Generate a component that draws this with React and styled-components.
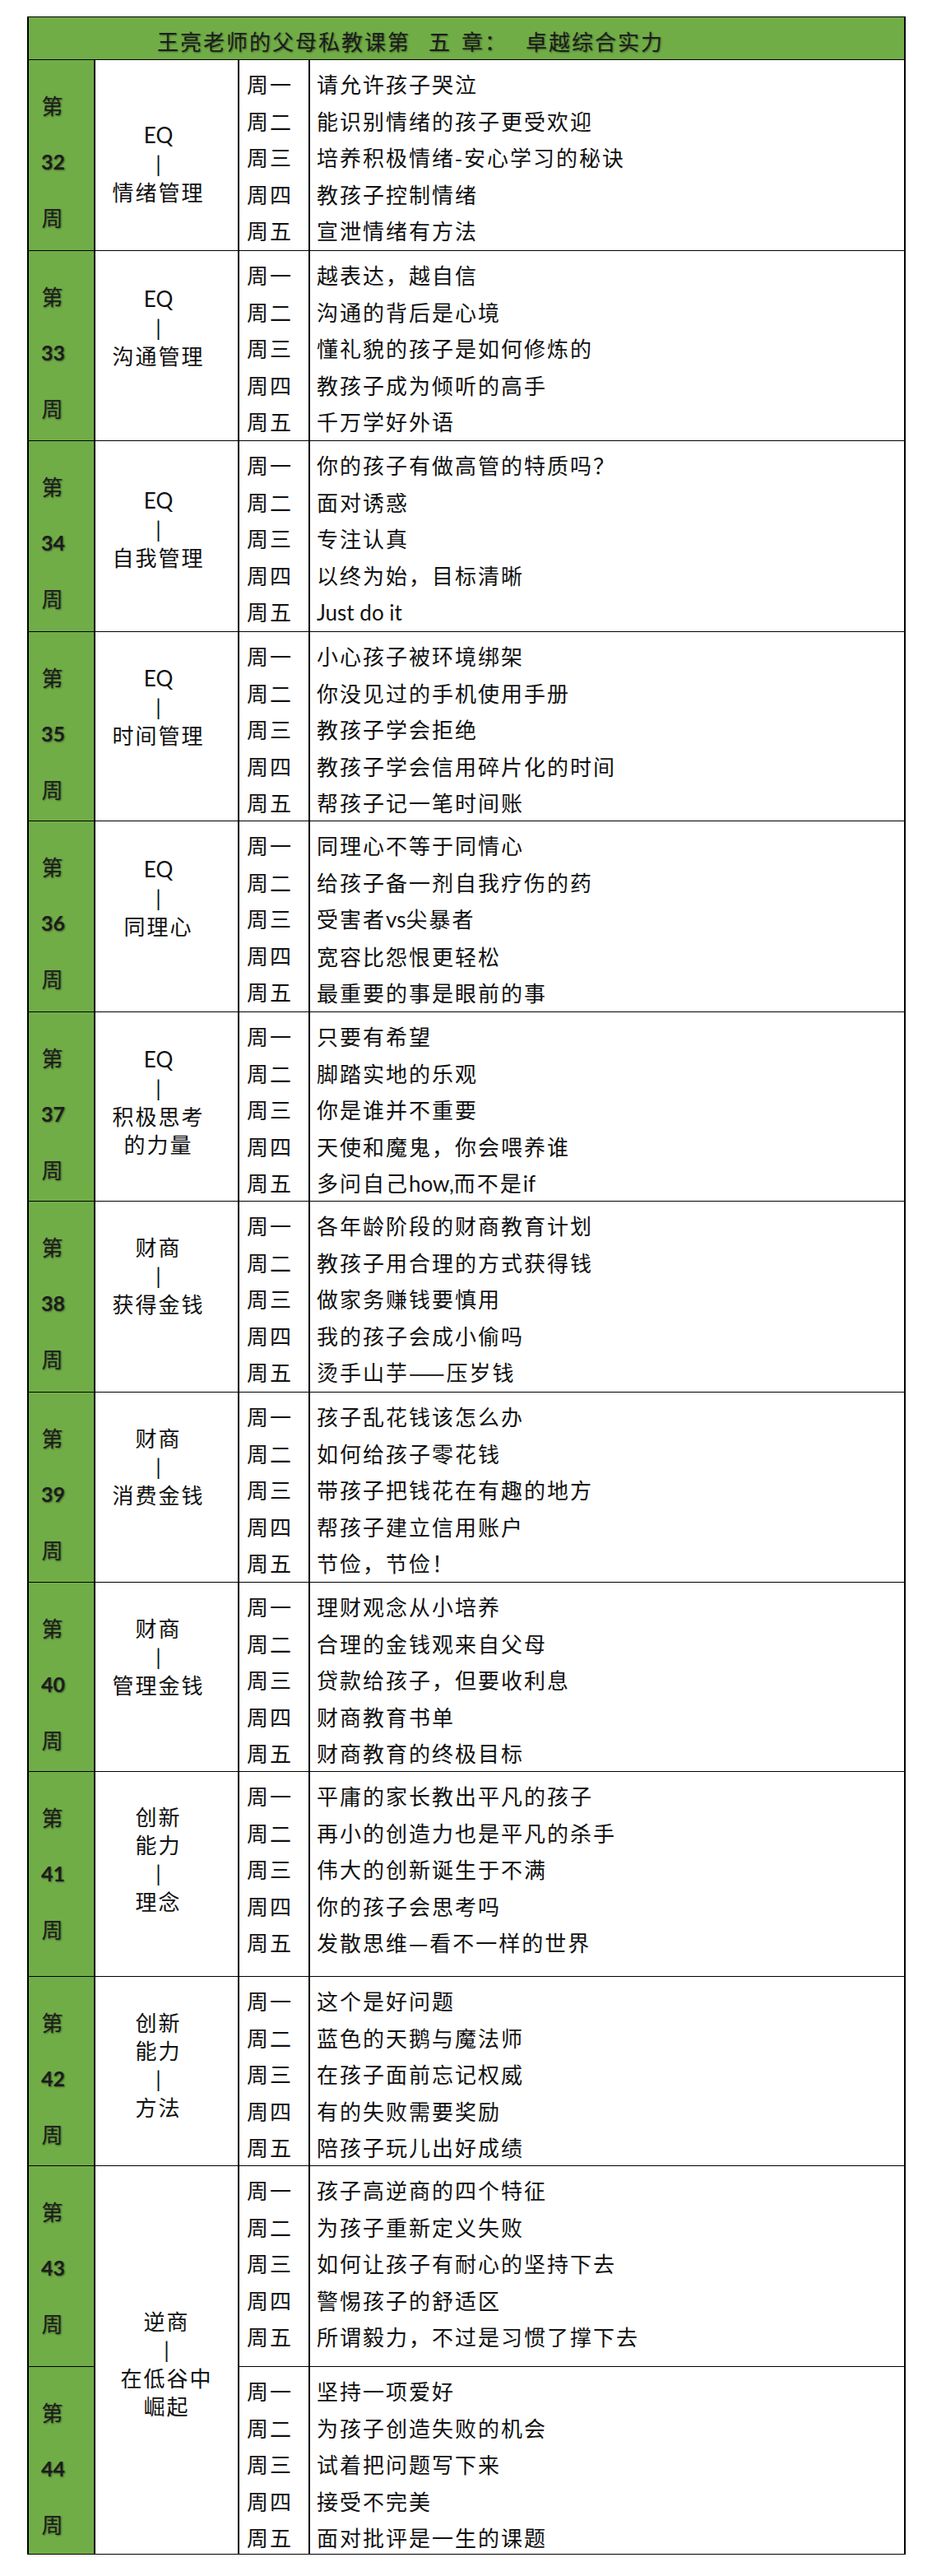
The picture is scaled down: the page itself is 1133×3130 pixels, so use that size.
import React from "react"
import styled, { createGlobalStyle } from "styled-components"

const GlobalStyle = createGlobalStyle`
    html, body {
        margin: 0;
        padding: 0;
        background: #fff;
    }
    body {
        font-family: "Noto Sans CJK SC", "Noto Sans", sans-serif;
        color: #111;
    }
`

const weeks = [
    { n: 32, h: 232, tp: 73, topic: ["EQ", "|", "情绪管理"], days: ["请允许孩子哭泣", "能识别情绪的孩子更受欢迎", "培养积极情绪-安心学习的秘诀", "教孩子控制情绪", "宣泄情绪有方法"] },
    { n: 33, h: 231, tp: 40, topic: ["EQ", "|", "沟通管理"], days: ["越表达，越自信", "沟通的背后是心境", "懂礼貌的孩子是如何修炼的", "教孩子成为倾听的高手", "千万学好外语"] },
    { n: 34, h: 232, tp: 54, topic: ["EQ", "|", "自我管理"], days: ["你的孩子有做高管的特质吗？", "面对诱惑", "专注认真", "以终为始，目标清晰", "Just do it"] },
    { n: 35, h: 230, tp: 38, topic: ["EQ", "|", "时间管理"], days: ["小心孩子被环境绑架", "你没见过的手机使用手册", "教孩子学会拒绝", "教孩子学会信用碎片化的时间", "帮孩子记一笔时间账"] },
    { n: 36, h: 232, tp: 40, topic: ["EQ", "|", "同理心"], days: ["同理心不等于同情心", "给孩子备一剂自我疗伤的药", "受害者vs尖暴者", "宽容比怨恨更轻松", "最重要的事是眼前的事"] },
    { n: 37, h: 230, tp: 39, topic: ["EQ", "|", "积极思考", "的力量"], days: ["只要有希望", "脚踏实地的乐观", "你是谁并不重要", "天使和魔鬼，你会喂养谁", "多问自己how,而不是if"] },
    { n: 38, h: 232, tp: 38, topic: ["财商", "|", "获得金钱"], days: ["各年龄阶段的财商教育计划", "教孩子用合理的方式获得钱", "做家务赚钱要慎用", "我的孩子会成小偷吗", "烫手山芋——压岁钱"] },
    { n: 39, h: 231, tp: 38, topic: ["财商", "|", "消费金钱"], days: ["孩子乱花钱该怎么办", "如何给孩子零花钱", "带孩子把钱花在有趣的地方", "帮孩子建立信用账户", "节俭，节俭！"] },
    { n: 40, h: 230, tp: 38, topic: ["财商", "|", "管理金钱"], days: ["理财观念从小培养", "合理的金钱观来自父母", "贷款给孩子，但要收利息", "财商教育书单", "财商教育的终极目标"] },
    { n: 41, h: 249, tp: 37, topic: ["创新", "能力", "|", "理念"], days: ["平庸的家长教出平凡的孩子", "再小的创造力也是平凡的杀手", "伟大的创新诞生于不满", "你的孩子会思考吗", "发散思维—看不一样的世界"] },
    { n: 42, h: 230, tp: 38, topic: ["创新", "能力", "|", "方法"], days: ["这个是好问题", "蓝色的天鹅与魔法师", "在孩子面前忘记权威", "有的失败需要奖励", "陪孩子玩儿出好成绩"] },
    { n: 43, h: 244, tp: 171, span: 2, pr: 0, topic: ["逆商", "|", "在低谷中", "崛起"], days: ["孩子高逆商的四个特征", "为孩子重新定义失败", "如何让孩子有耐心的坚持下去", "警惕孩子的舒适区", "所谓毅力，不过是习惯了撑下去"] },
    { n: 44, h: 228, days: ["坚持一项爱好", "为孩子创造失败的机会", "试着把问题写下来", "接受不完美", "面对批评是一生的课题"] },
]

const dayNames = ["周一", "周二", "周三", "周四", "周五"]

const Sheet = styled.div`
    margin: 20px 0 0 33px;
    width: 1068px;
    box-sizing: border-box;
    border-left: 2px solid #000;
    border-right: 2px solid #000;
`

const Title = styled.div`
    height: 53px;
    box-sizing: border-box;
    border-top: 1px solid #000;
    border-bottom: 1px solid #000;
    background: #70ad47;
    padding: 7px 0 0 156px;
    font-size: 26px;
    line-height: 44px;
    letter-spacing: 2px;
    color: #1c1c1c;
    text-shadow: 1px 1px 2px rgba(0, 0, 0, 0.45);
    white-space: nowrap;
`

const Gap = styled.span`
    display: inline-block;
    width: ${({ $w }) => $w}px;
`

const Grid = styled.div`
    display: grid;
    grid-template-columns: 81px 175px 86px 1fr;
    grid-template-rows: ${({ $rows }) => $rows.map((h) => `${h}px`).join(" ")};
`

const Cell = styled.div`
    box-sizing: border-box;
    border-bottom: 1px solid #000;
    border-right: 2px solid #000;
    font-size: 26px;
    letter-spacing: 2px;
    white-space: nowrap;
    &:nth-child(4n) {
        border-right: none;
    }
`

const WeekCell = styled(Cell)`
    background: #70ad47;
    padding: 21px 20px 0 0;
    text-align: center;
    line-height: 68px;
    color: #1c1c1c;
    text-shadow: 1px 1px 2px rgba(0, 0, 0, 0.45);
`

const WeekNum = styled.div`
    font-family: Lato, "Liberation Sans", sans-serif;
    font-weight: 700;
    font-size: 25px;
    letter-spacing: 0;
`

const TopicCell = styled(Cell)`
    grid-row: span ${({ $span }) => $span || 1};
    padding: ${({ $top }) => $top}px ${({ $pr }) => ($pr === undefined ? 20 : $pr)}px 0 0;
    text-align: center;
    line-height: 34px;
`

const DayCell = styled(Cell)`
    padding: 7px 0 0 9px;
    line-height: 44.5px;
`

const ContentCell = styled(Cell)`
    padding: 7px 0 0 8px;
    line-height: 44.5px;
    border-right: none;
`

const Latin = styled.span`
    font-family: Lato, "Liberation Sans", sans-serif;
    letter-spacing: 0;
`

const Mixed = ({ text }) =>
    text.split(/([A-Za-z|][A-Za-z, ]*)/).map((part, i) =>
        /[A-Za-z|]/.test(part) ? <Latin key={i}>{part}</Latin> : part
    )

const Week = ({ week }) => (
    <>
        <WeekCell>
            <div>第</div>
            <WeekNum>{week.n}</WeekNum>
            <div>周</div>
        </WeekCell>
        {week.topic && (
            <TopicCell $top={week.tp} $span={week.span} $pr={week.pr}>
                {week.topic.map((line, i) => (
                    <div key={i}><Mixed text={line} /></div>
                ))}
            </TopicCell>
        )}
        <DayCell>
            {dayNames.map((d) => <div key={d}>{d}</div>)}
        </DayCell>
        <ContentCell>
            {week.days.map((d, i) => (
                <div key={i}><Mixed text={d} /></div>
            ))}
        </ContentCell>
    </>
)

const App = () => (
    <>
        <GlobalStyle />
        <Sheet>
            <Title>
                王亮老师的父母私教课第<Gap $w={22} />五<Gap $w={12} />章：<Gap $w={22} />卓越综合实力
            </Title>
            <Grid $rows={weeks.map((w) => w.h)}>
                {weeks.map((w) => <Week key={w.n} week={w} />)}
            </Grid>
        </Sheet>
    </>
)

export default App
